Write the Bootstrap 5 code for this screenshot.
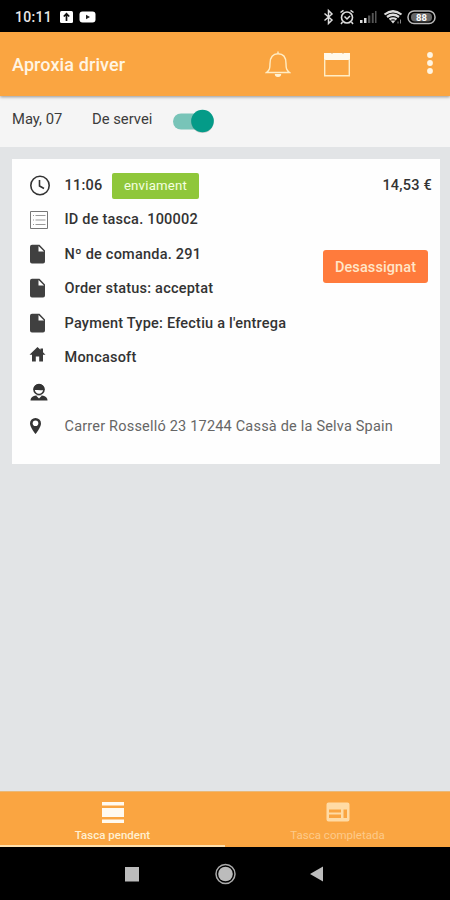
<!DOCTYPE html>
<html lang="ca">
<head>
<meta charset="utf-8">
<meta name="viewport" content="width=device-width, initial-scale=1">
<title>Aproxia driver</title>
<link href="https://cdn.jsdelivr.net/npm/bootstrap@5.3.0/dist/css/bootstrap.min.css" rel="stylesheet">
<style>
body{font-family:Roboto,"Noto Sans",sans-serif;background:#e2e4e6;color:#333;height:900px;overflow:hidden;line-height:1}
svg{display:block;flex:none}
.status{height:32px;background:#000;color:#e8e8e8;padding:1px 14px 0 15px}
.clock{font-size:14px;font-weight:500;letter-spacing:.3px;width:45px}
.topbar{height:64px;background:#faa541;padding:0 16px 0 12px;box-shadow:0 1px 3px rgba(0,0,0,.4);z-index:2;position:relative}
.title{font-size:18px;font-weight:500;color:#fff5e4;letter-spacing:.1px;padding-top:2px}
.bell{margin-right:33px}
.kebab{margin-left:74px}
.service{height:51px;background:#f5f5f5;padding:0 12px 4px;font-size:14.8px;color:#3c3c3c}
.day{width:80px}
.svc{width:81px}
.toggle{width:41px;height:24px;margin-top:3px}
.task{margin:12px 10px 0 12px;height:305px;background:#fefefe;padding:9px 8px 0 17px}
.line{height:34.4px;padding-top:2px;font-size:14.5px;font-weight:500;letter-spacing:.22px;white-space:nowrap}
.ico{width:35.5px;flex:none;margin-top:-2px}
.tag{width:87px;height:26px;background:#8fc73a;color:#f5ffe0;border-radius:2px;margin:-1px 0 0 9.600px;font-weight:400;font-size:13.2px}
.assign{width:105px;height:33px;background:#ff7b3c;color:#ffe6c8;border:0;border-radius:3px;margin:48px 4px 0 0;padding:2px 0 0;font-size:14.5px;font-weight:500;letter-spacing:.1px}
.addr{font-weight:400;color:#666;letter-spacing:.2px}
.tabs{height:56px;background:#faa541;border-top:1px solid #e9b978;font-size:11.5px}
.tab-item{color:#ffe4b8;padding-top:9px;gap:6px;border-bottom:2px solid transparent}
.tab-item.on{border-bottom-color:#ffe0ac;font-weight:500;color:#fff0d2}
.tab-item.off{color:#fdca8a}
.sys{height:53px;background:#000}
</style>
<script src="https://cdn.jsdelivr.net/npm/bootstrap@5.3.0/dist/js/bootstrap.bundle.min.js"></script>
</head>
<body class="d-flex flex-column">
<div class="status d-flex align-items-center flex-shrink-0">
  <span class="clock">10:11</span>
  <svg width="36" height="14" viewBox="0 0 36 14"><rect y="1" width="13" height="12" rx="1.500" fill="#fff"/><path d="M6.500 11V4M3.800 6.500 6.500 3.800 9.200 6.500" stroke="#111" stroke-width="1.700" fill="none"/><rect x="19.500" y="1.500" width="16" height="11" rx="3" fill="#fff"/><path d="M26 4.800v4.400L30 7z" fill="#222"/></svg>
  <svg class="ms-auto" width="114" height="18" viewBox="0 0 114 18" fill="none" stroke="#ddd">
    <path d="M2.500 5.500 10 12 6.500 15.500V2.500L10 6 2.500 12.500" stroke-width="1.500"/>
    <circle cx="25" cy="9.500" r="5.500" stroke-width="1.600"/><path d="M18.500 4.500 21.500 2.300M31.500 4.500 28.500 2.300M20.500 14 19 16M29.500 14 31 16M22.500 8.500 25 11 28 8" stroke-width="1.500"/>
    <g stroke="none" fill="#ddd"><path d="M38 12h2.500v3H38zM42 10h2.500v5H42z"/><path d="M46 7.500h2.300V15H46zM49.800 5h1.900v10h-1.900zM53 3h1.500v12H53z" fill="#555"/></g>
    <path d="M62.500 6.500Q71 0 79.500 6.500M65 9Q71 4.500 77 9M67.500 11.500Q71 9 74.500 11.500" stroke-width="2.200"/><path d="M68.500 12.500h5L71 15.500z" fill="#ddd" stroke="none"/><path d="M76 13.500v2M78.500 11.500v4" stroke="#888"/>
    <rect x="86" y="3" width="27" height="12.500" rx="6" stroke="#bbb" stroke-width="1.500"/><rect x="89" y="5" width="21" height="8.500" rx="4" fill="#666" stroke="none"/>
    <text x="99.500" y="12.800" fill="#fff" stroke="none" font-size="9.500" font-weight="700" text-anchor="middle">88</text>
  </svg>
</div>
<nav class="topbar d-flex align-items-center flex-shrink-0">
  <span class="title">Aproxia driver</span>
  <svg class="bell ms-auto" width="26" height="28" viewBox="0 0 26 28" fill="none" stroke="#ffedc5" stroke-width="1.400"><path d="M13 1.500v2M1.500 22.500C4.500 20 5 18.500 5 13.500 5 7 8 3.800 13 3.800S21 7 21 13.500c0 5 .5 6.500 3.500 9z"/><path d="M9.800 24h6.400a3.200 3 0 0 1-6.400 0z" fill="#fff2d3" stroke="none"/></svg>
  <svg width="28" height="28" viewBox="0 0 28 28"><path d="M0 3h26v7H0z" fill="#fff9ec"/><path d="M.7 9v16.800h24.600V9" stroke="#ffedc5" stroke-width="1.400" fill="none"/><path d="M6 1.800q2 3 4 0M17 1.800q2 3 4 0" stroke="#e8a85a" fill="none"/></svg>
  <svg class="kebab" width="8" height="24" viewBox="0 0 8 24" fill="#fff5e2"><circle cx="4" cy="3" r="2.900"/><circle cx="4" cy="11" r="2.900"/><circle cx="4" cy="19" r="2.900"/></svg>
</nav>
<section class="service d-flex flex-shrink-0 align-items-center">
  <span class="day">May, 07</span><span class="svc">De servei</span>
  <svg class="toggle" viewBox="0 0 41 24"><rect y="4.500" width="36" height="16" rx="8" fill="#78c4b8"/><circle cx="29.500" cy="12.700" r="11.300" fill="#000" opacity=".18"/><circle cx="29.500" cy="12" r="11.300" fill="#049b88"/></svg>
</section>
<main class="flex-grow-1">
  <article class="task">
    <div class="line d-flex align-items-center">
      <span class="ico"><svg width="22" height="22" viewBox="0 0 22 22" fill="none" stroke="#333" stroke-width="1.600"><circle cx="11" cy="11.500" r="9.200"/><path d="M10.500 6V12L15 14.500"/></svg></span>
      <span>11:06</span><span class="tag d-flex align-items-center justify-content-center">enviament</span><span class="ms-auto">14,53 €</span>
    </div>
    <div class="d-flex justify-content-between align-items-start">
      <div>
        <div class="line d-flex align-items-center"><span class="ico"><svg width="20" height="18" viewBox="0 0 20 18" fill="none" stroke="#777"><path d="M1.500.5h17v17h-17z"/><path d="M4 4.500h1M6.500 4.500h10M4 9h1M6.500 9h10M4 13.500h1M6.500 13.500h10" stroke="#999"/></svg></span>ID de tasca. 100002</div>
        <div class="line d-flex align-items-center"><span class="ico"><svg width="18" height="20" viewBox="0 0 18 20"><path d="M3 .8h7.500L16 6.500V17.500a2 2 0 0 1-2 2H3a2 2 0 0 1-2-2V2.800a2 2 0 0 1 2-2z" fill="#404040"/><path d="M9.500 2v5.500h5.500z" fill="#fff"/></svg></span>Nº de comanda. 291</div>
        <div class="line d-flex align-items-center"><span class="ico"><svg width="18" height="20" viewBox="0 0 18 20"><path d="M3 .8h7.500L16 6.500V17.500a2 2 0 0 1-2 2H3a2 2 0 0 1-2-2V2.800a2 2 0 0 1 2-2z" fill="#404040"/><path d="M9.500 2v5.500h5.500z" fill="#fff"/></svg></span>Order status: acceptat</div>
        <div class="line d-flex align-items-center"><span class="ico"><svg width="18" height="20" viewBox="0 0 18 20"><path d="M3 .8h7.500L16 6.500V17.500a2 2 0 0 1-2 2H3a2 2 0 0 1-2-2V2.800a2 2 0 0 1 2-2z" fill="#404040"/><path d="M9.500 2v5.500h5.500z" fill="#fff"/></svg></span>Payment Type: Efectiu a l'entrega</div>
      </div>
      <button class="btn assign" type="button">Desassignat</button>
    </div>
    <div class="line d-flex align-items-center"><span class="ico"><svg width="18" height="20" viewBox="0 0 18 20" fill="#3a3a3a"><path d="M8.500 0 11.500 2.800V1.500H14V5.200L16.500 7.700H14V14.500H10.200V9.500H6.800V14.500H3V7.700H.5z"/></svg></span>Moncasoft</div>
    <div class="line d-flex align-items-center"><span class="ico"><svg width="20" height="18" viewBox="0 0 20 18"><path d="M1.500 17.500c0-3 2.500-4.500 5.500-5h6c3 .5 5.500 2 5.500 5z" fill="#333"/><path d="M7 12.500 10 15.500 13 12.500z" fill="#fff"/><circle cx="10" cy="6.500" r="5" fill="#fff" stroke="#333" stroke-width="1.600"/><path d="M4.500 7A5.500 6 0 0 1 15.500 7C12 7.500 8 7 4.500 7z" fill="#333"/></svg></span></div>
    <div class="line d-flex align-items-center addr"><span class="ico"><svg width="14" height="18" viewBox="0 0 14 18"><path d="M6.500 1A5.500 5.500 0 0 0 1 6.500C1 10.500 6.500 17 6.500 17S12 10.500 12 6.500A5.500 5.500 0 0 0 6.500 1z" fill="#333"/><circle cx="6.500" cy="6.300" r="2.800" fill="#fff"/></svg></span>Carrer Rosselló 23 17244 Cassà de la Selva Spain</div>
  </article>
</main>
<div class="tabs d-flex flex-shrink-0">
  <div class="tab-item on w-50 d-flex flex-column align-items-center"><svg width="22" height="23" viewBox="0 0 22 23" fill="#fffaf0"><path d="M0 1h22v3.500H0zM0 7h22v9H0zM0 18.500h22V22H0z"/></svg><span>Tasca pendent</span></div>
  <div class="tab-item off w-50 d-flex flex-column align-items-center"><svg width="24" height="23" viewBox="0 0 24 23"><path d="M2.500 1.500h19a2 2 0 0 1 2 2v15a2 2 0 0 1-2 2h-19a2 2 0 0 1-2-2v-15a2 2 0 0 1 2-2z" fill="#ffdba5"/><path d="M3 8.500h12v3H3zM3 13.500h12v3.500H3zM17.500 8.500h3.500v8.500h-3.500z" fill="#faa541"/></svg><span>Tasca completada</span></div>
</div>
<div class="sys d-flex flex-shrink-0 justify-content-center align-items-center">
  <svg width="202" height="24" viewBox="0 0 202 24" fill="#bcbcbc"><path d="M1 5h14v14.500H1zM186 12 199 4.500v15z"/><circle cx="101.500" cy="12" r="9.500" fill="none" stroke="#aaa" stroke-width="1.500"/><circle cx="101.500" cy="12" r="7.300"/></svg>
</div>
</body>
</html>
